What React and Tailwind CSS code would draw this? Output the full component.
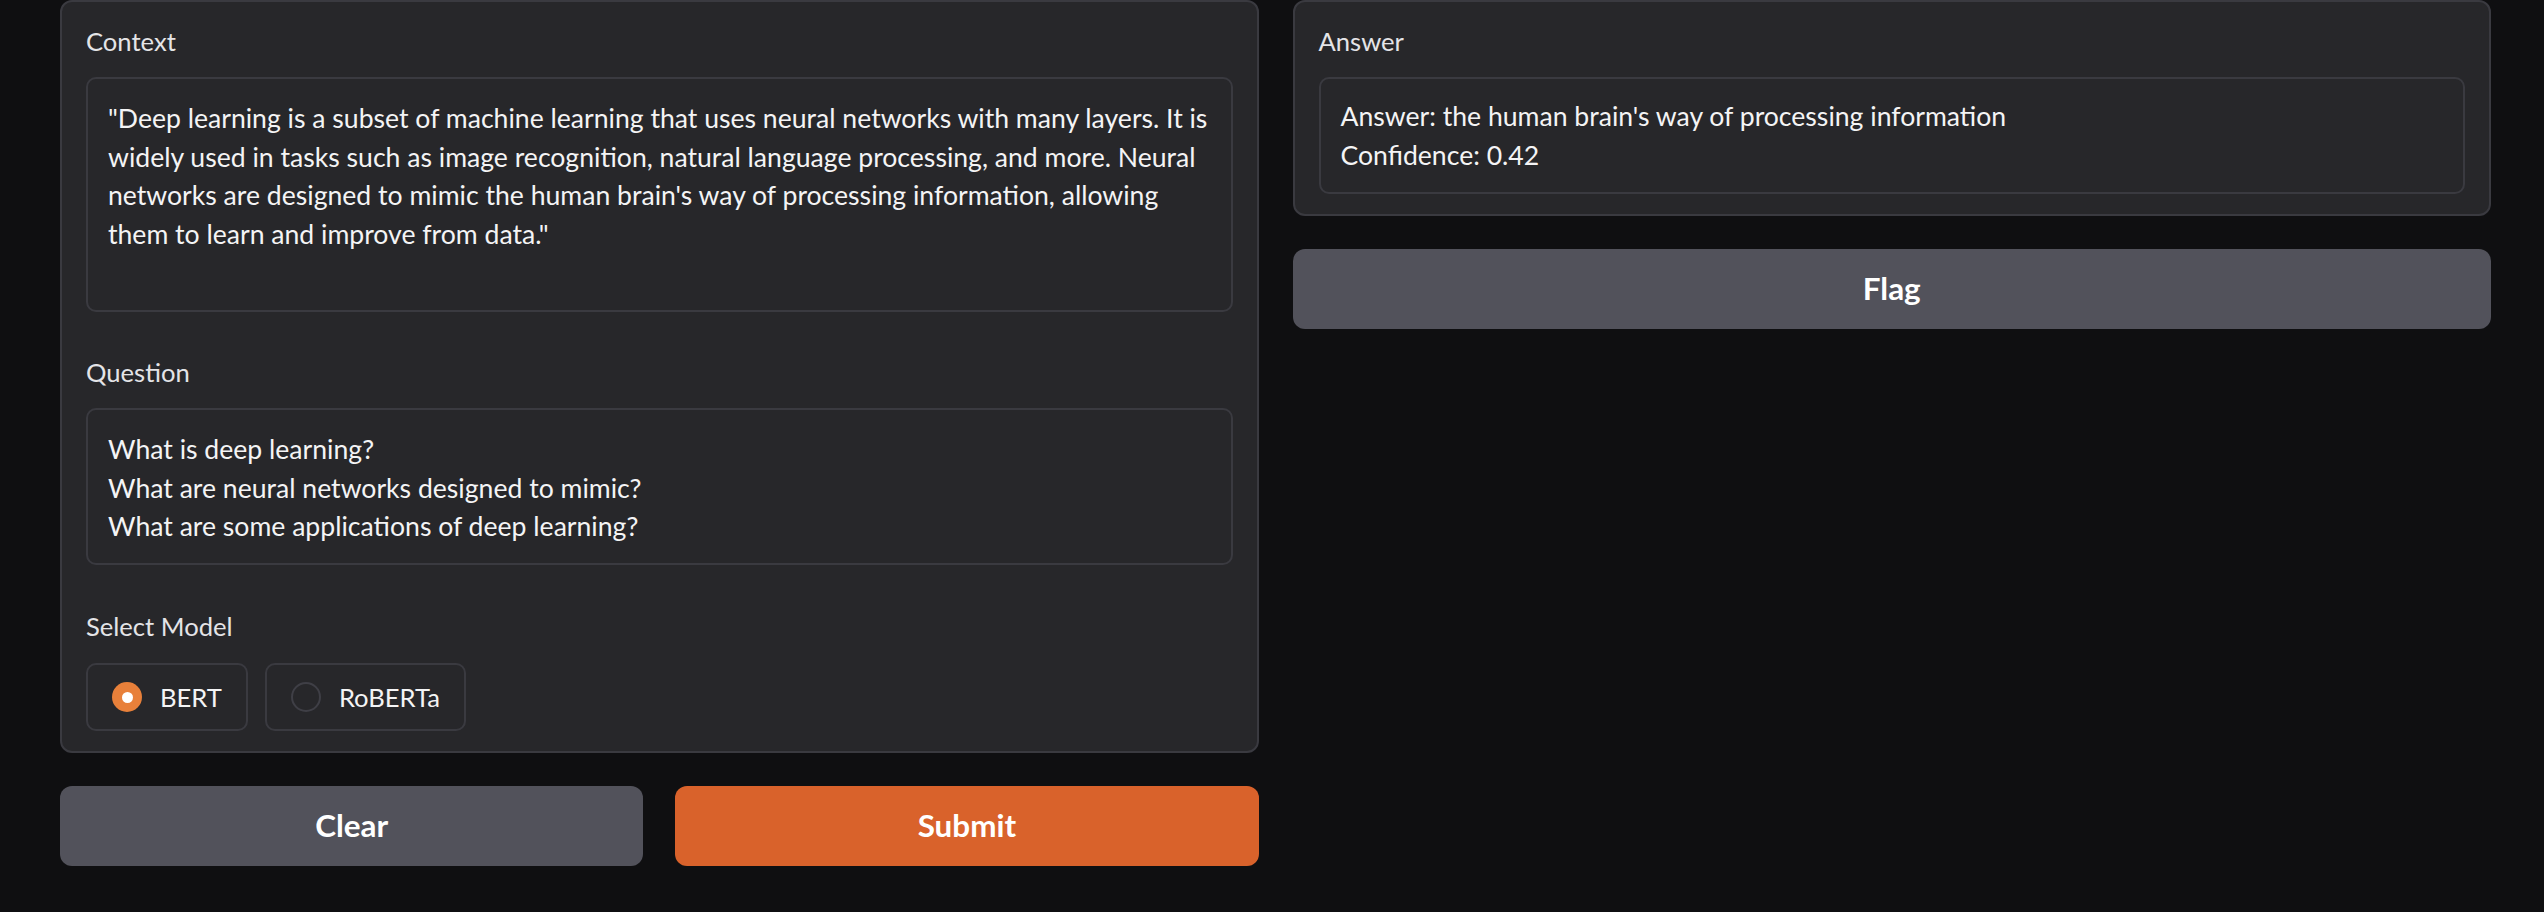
import React from "react";

function Label({ children }) {
  return <div className="text-[25.6px] leading-[32px] text-[#e4e4e7]">{children}</div>;
}

function Radio({ checked, label }) {
  return (
    <div className="h-[68px] rounded-[10px] border-2 border-[#3a3a40] px-[24px] flex items-center gap-[18px]">
      {checked ? (
        <div className="w-[30px] h-[30px] rounded-full bg-[#e8803a] flex items-center justify-center">
          <div className="w-[11px] h-[11px] rounded-full bg-white" />
        </div>
      ) : (
        <div className="w-[30px] h-[30px] rounded-full border-2 border-[#3f3f46]" />
      )}
      <span className="text-[25.6px] text-[#f4f4f5]">{label}</span>
    </div>
  );
}

const boxText = "text-[26.6px] leading-[38.5px] text-[#f4f4f5]";

export default function App() {
  return (
    <div className="min-h-[912px] w-full bg-[#0f0f11] pl-[60px] pr-[53px] font-['Lato',sans-serif] flex items-start gap-[34px]">
      <div className="flex-1 flex flex-col gap-[33px]">
        <div className="rounded-[12px] border-2 border-[#3a3a40] bg-[#27272a] px-[24px] pt-[23px] pb-[20px] flex flex-col">
          <Label>Context</Label>
          <div className={"mt-[20px] h-[235px] rounded-[10px] border-2 border-[#3a3a40] px-[20px] pt-[20px] " + boxText}>
            <div>"Deep learning is a subset of machine learning that uses neural networks with many layers. It is</div>
            <div>widely used in tasks such as image recognition, natural language processing, and more. Neural</div>
            <div>networks are designed to mimic the human brain's way of processing information, allowing</div>
            <div>them to learn and improve from data."</div>
          </div>
          <div className="mt-[44px]">
            <Label>Question</Label>
          </div>
          <div className={"mt-[20px] h-[157px] rounded-[10px] border-2 border-[#3a3a40] px-[20px] pt-[20px] " + boxText}>
            <div>What is deep learning?</div>
            <div>What are neural networks designed to mimic?</div>
            <div>What are some applications of deep learning?</div>
          </div>
          <div className="mt-[45px]">
            <Label>Select Model</Label>
          </div>
          <div className="mt-[21px] flex gap-[17px]">
            <Radio checked label="BERT" />
            <Radio label="RoBERTa" />
          </div>
        </div>
        <div className="flex gap-[32px]">
          <button className="flex-1 h-[80px] rounded-[12px] bg-[#52525b] text-white font-bold text-[31.4px]">Clear</button>
          <button className="flex-1 h-[80px] rounded-[12px] bg-[#d9622b] text-white font-bold text-[31.4px]">Submit</button>
        </div>
      </div>
      <div className="flex-1 flex flex-col gap-[33px]">
        <div className="rounded-[12px] border-2 border-[#3a3a40] bg-[#27272a] px-[24px] pt-[23px] pb-[20px] flex flex-col">
          <Label>Answer</Label>
          <div className={"mt-[20px] h-[117px] rounded-[10px] border-2 border-[#3a3a40] px-[20px] pt-[18px] " + boxText}>
            <div>Answer: the human brain's way of processing information</div>
            <div>Confidence: 0.42</div>
          </div>
        </div>
        <button className="h-[80px] rounded-[12px] bg-[#52525b] text-white font-bold text-[31.4px]">Flag</button>
      </div>
    </div>
  );
}
